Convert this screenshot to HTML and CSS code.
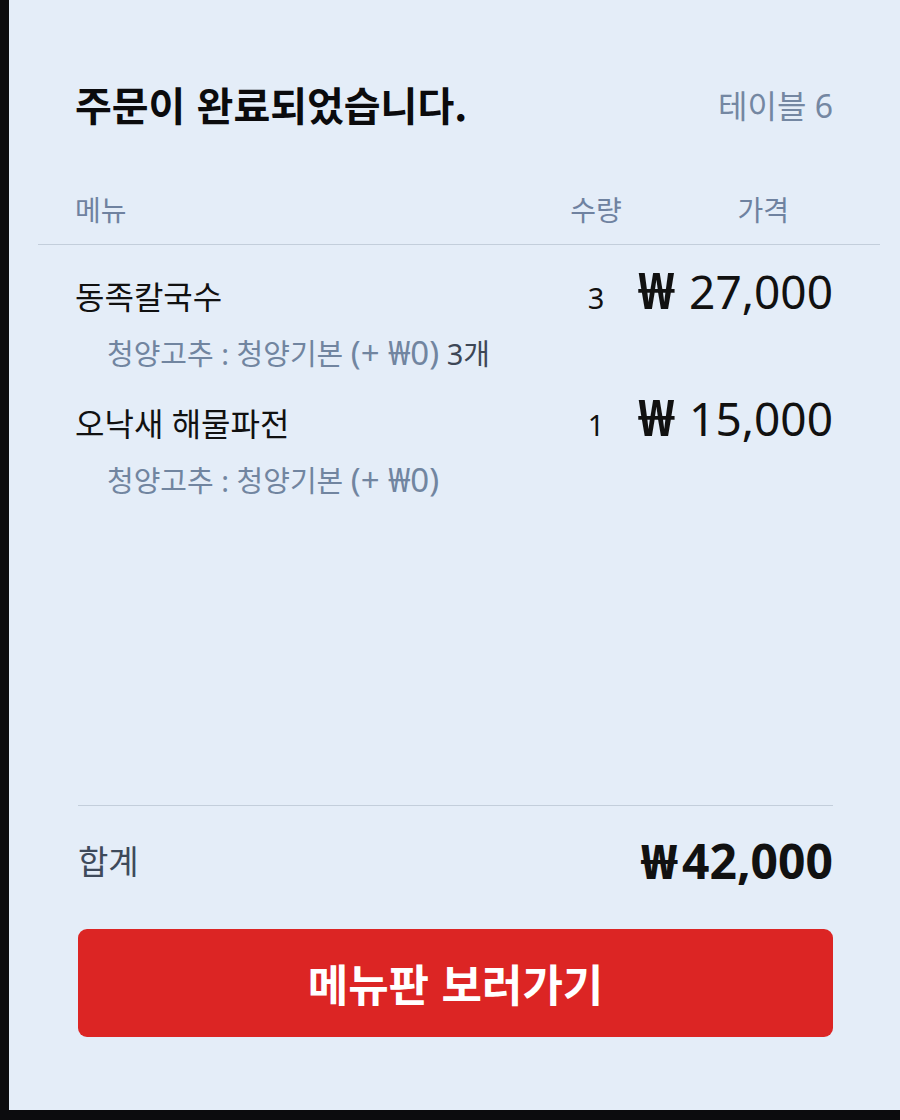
FILE: index.html
```html
<!DOCTYPE html>
<html lang="ko">
<head>
    <meta charset="UTF-8">
    <meta name="viewport" content="width=device-width, initial-scale=1.0">
    <title>주문 완료</title>
    <link rel="stylesheet" href="styles.css">
</head>
<body>

<div class="screen">
    <div class="top">
        <h1 class="title">주문이 완료되었습니다.</h1>
        <span class="table-no">테이블 6</span>
    </div>

    <div class="list-head">
        <span>메뉴</span>
        <span class="col-qty">수량</span>
        <span class="col-price">가격</span>
    </div>
    <div class="line line-wide"></div>

    <div class="items">
        <div class="item">
            <div class="item-main">
                <span class="item-name">동족칼국수</span>
                <span class="item-qty">3</span>
                <span class="item-price"><b>₩</b> 27,000</span>
            </div>
            <p class="item-option">청양고추 : 청양기본 <span class="opt-price">(+ ₩0)</span> <span class="opt-count">3개</span></p>
        </div>

        <div class="item">
            <div class="item-main">
                <span class="item-name">오낙새 해물파전</span>
                <span class="item-qty">1</span>
                <span class="item-price"><b>₩</b> 15,000</span>
            </div>
            <p class="item-option">청양고추 : 청양기본 <span class="opt-price">(+ ₩0)</span></p>
        </div>
    </div>

    <div class="line line-total"></div>
    <div class="total">
        <span class="total-label">합계</span>
        <span class="total-price"><b>₩</b>42,000</span>
    </div>

    <button class="menu-btn">메뉴판 보러가기</button>
</div>

</body>
</html>
```

FILE: styles.css
```css
body {
    margin: 0;
    background-color: #0c0c0e;
    font-family: "Noto Sans", "Noto Sans CJK KR", sans-serif;
    color: #111;
}

.screen {
    margin-left: 9px;
    height: 1110px;
    box-sizing: border-box;
    padding: 0 67px 0 66px;
    background-color: #e4edf8;
    display: flex;
    flex-direction: column;
}

/* title row */
.top {
    margin-top: 80px;
    height: 48px;
    display: flex;
    justify-content: space-between;
    align-items: center;
}

.title {
    margin: 0;
    font-family: "Noto Sans CJK KR", sans-serif;
    font-size: 40px;
    line-height: 48px;
    font-weight: 700;
    color: #0b0b0d;
}

.table-no {
    font-size: 32px;
    color: #7487a2;
}

/* list header */
.list-head,
.item-main {
    display: grid;
    grid-template-columns: 1fr 64px 205px;
}

.list-head {
    margin-top: 64px;
    font-size: 28px;
    line-height: 36px;
    color: #6f82a0;
}

.col-qty {
    text-align: center;
}

.col-price {
    text-align: right;
    padding-right: 44px;
}

.line {
    height: 1px;
    background-color: #c3cedb;
}

.line-wide {
    margin: 16px -47px 0 -37px;
}

/* items */
.items {
    flex: 1;
}

.item {
    padding-top: 25px;
}

.item-main {
    align-items: baseline;
    line-height: 40px;
}

.item-name {
    font-size: 32px;
}

.item-qty {
    font-size: 29px;
    text-align: center;
}

.item-price {
    text-align: right;
    font-size: 46px;
    white-space: nowrap;
}

.item-price b {
    font-size: 1.1em;
    margin-right: 2px;
}

.item-option {
    margin: 17px 0 0 32px;
    font-size: 29px;
    line-height: 36px;
    color: #7185a0;
}

.opt-price {
    font-size: 33px;
}

.opt-count {
    color: #3d4756;
}

/* total */
.line-total {
    margin: 0 0 0 3px;
}

.total {
    margin: 30px 0 0 3px;
    height: 48px;
    display: flex;
    justify-content: space-between;
    align-items: center;
}

.total-label {
    font-size: 33px;
    color: #3e4a5b;
}

.total-price {
    font-size: 48px;
    font-weight: 700;
}

.total-price b {
    margin-right: 4px;
}

.menu-btn {
    margin: 45px 0 73px 3px;
    height: 108px;
    border: none;
    border-radius: 9px;
    background-color: #dc2524;
    color: #fff;
    font-family: "Noto Sans CJK KR", sans-serif;
    font-size: 44px;
    font-weight: 700;
    cursor: pointer;
}
```
